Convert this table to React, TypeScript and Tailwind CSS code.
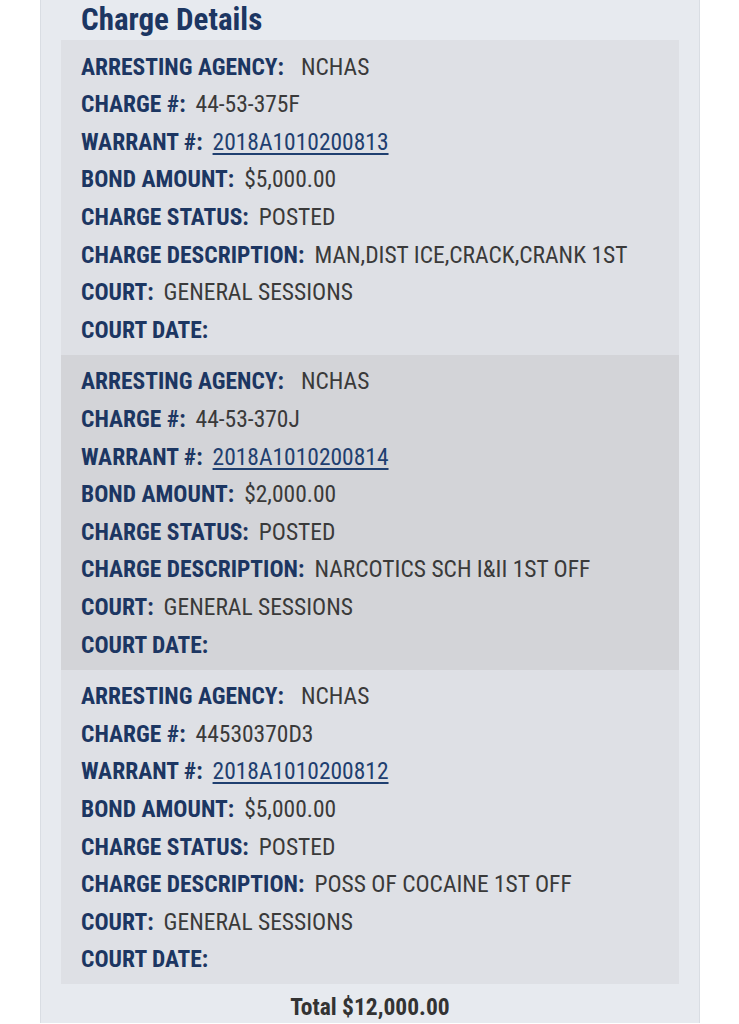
const charges = [
  {
    agency: "NCHAS",
    charge: "44-53-375F",
    warrant: "2018A1010200813",
    bond: "$5,000.00",
    status: "POSTED",
    description: "MAN,DIST ICE,CRACK,CRANK 1ST",
    court: "GENERAL SESSIONS",
  },
  {
    agency: "NCHAS",
    charge: "44-53-370J",
    warrant: "2018A1010200814",
    bond: "$2,000.00",
    status: "POSTED",
    description: "NARCOTICS SCH I&II 1ST OFF",
    court: "GENERAL SESSIONS",
  },
  {
    agency: "NCHAS",
    charge: "44530370D3",
    warrant: "2018A1010200812",
    bond: "$5,000.00",
    status: "POSTED",
    description: "POSS OF COCAINE 1ST OFF",
    court: "GENERAL SESSIONS",
  },
];

function Row({ label, children, gap = "ml-[10px]" }: { label: string; children?: React.ReactNode; gap?: string }) {
  return (
    <div className="flex h-[37.6px] items-center whitespace-nowrap">
      <span className="font-bold text-[#1c3662]">{label}</span>
      {children && <span className={`${gap} text-[#3a3a3a]`}>{children}</span>}
    </div>
  );
}

export default function App() {
  return (
    <div className="min-h-screen bg-white font-['Roboto_Condensed','Liberation_Sans_Narrow','DejaVu_Sans_Condensed',Roboto,sans-serif] [font-stretch:condensed]">
      <div className="mx-[40px] w-[660px] border-x border-[#d9dde3] bg-[#e7eaef] px-[20px]">
        <h2 className="h-[40px] pl-[20px] text-[31px] font-bold leading-[40px] text-[#1c3662]">Charge Details</h2>
        {charges.map((c, i) => (
          <div
            key={c.warrant}
            className={`${i === 1 ? "bg-[#d3d4d8]" : "bg-[#dee0e5]"} px-[20px] pt-[8.5px] pb-[5.5px] text-[23.5px]`}
          >
            <Row label="ARRESTING AGENCY:" gap="ml-[17px]">{c.agency}</Row>
            <Row label="CHARGE #:">{c.charge}</Row>
            <Row label="WARRANT #:">
              <a href="#" className="text-[#1f3f70] underline underline-offset-[3px]">
                {c.warrant}
              </a>
            </Row>
            <Row label="BOND AMOUNT:">{c.bond}</Row>
            <Row label="CHARGE STATUS:">{c.status}</Row>
            <Row label="CHARGE DESCRIPTION:">{c.description}</Row>
            <Row label="COURT:">{c.court}</Row>
            <Row label="COURT DATE:" />
          </div>
        ))}
        <div className="h-[39px] pt-[7px] text-center text-[23.5px] font-bold leading-[32px] text-[#333]">Total $12,000.00</div>
      </div>
    </div>
  );
}
